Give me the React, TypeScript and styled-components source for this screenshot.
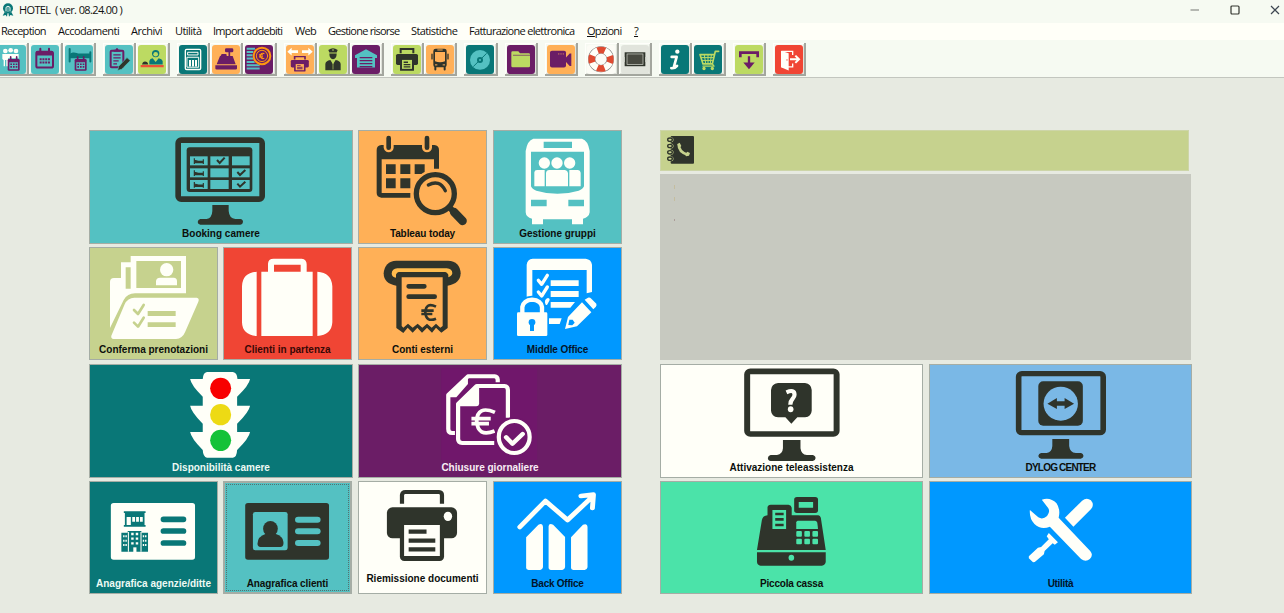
import React from "react";
import styled, { createGlobalStyle } from "styled-components";

const INK = "#2f342b";
const PAPER = "#fffff8";
const AQUA = "#54c1c2";
const TEAL = "#097777";
const ORANGE = "#ffb057";
const PURPLE = "#6b1d66";
const LIME = "#bcda62";
const OLIVE = "#c6d28e";
const RED = "#f04534";
const BLUE = "#0098ff";
const MINT = "#4be3a9";
const SKY = "#7ab8e6";

const GlobalStyle = createGlobalStyle`
  * { box-sizing: border-box; }
  body { margin: 0; overflow: hidden; background: #e7eae1; }
`;

const Window = styled.div`
  width: 1284px;
  height: 613px;
  overflow: hidden;
  display: flex;
  flex-direction: column;
  background: #e7eae1;
  font-family: "Open Sans", "Noto Sans", sans-serif;
  color: #111;
`;

const TitleBar = styled.header`
  height: 23px;
  flex: none;
  display: flex;
  align-items: center;
  padding: 0 4px 3px 2px;
  background: #f6faf2;
`;

const Title = styled.span`
  flex: 1;
  padding-left: 5px;
  font-size: 11px;
  line-height: 14px;
  letter-spacing: -0.62px;
  white-space: pre;
`;

const WindowControls = styled.div`
  display: flex;
  gap: 30px;
  svg { display: block; }
`;

const MenuBar = styled.nav`
  height: 17px;
  flex: none;
  display: flex;
  gap: 12px;
  padding-left: 1px;
  background: ${PAPER};
`;

const MenuItem = styled.span<{ $w: number; $ls?: number }>`
  width: ${(p) => p.$w}px;
  font-size: 11px;
  line-height: 16px;
  letter-spacing: ${(p) => p.$ls ?? -0.7}px;
  white-space: nowrap;
`;

const ToolBar = styled.div`
  height: 38px;
  flex: none;
  display: flex;
  gap: 7px;
  padding-top: 3px;
  background: #f6faf2;
  border-bottom: 1px solid #c3c6bf;
`;

const ToolGroup = styled.div`
  display: flex;
  flex: none;
  &:first-child { margin-left: -4px; }
`;

const ToolButton = styled.div`
  width: 33.33px;
  height: 33px;
  padding: 2px 0 0 2px;
  border-right: 2px solid #a3a69e;
  border-bottom: 2px solid #a3a69e;
  box-shadow: inset 1px 1px 0 #fffffb, inset -1px -1px 0 #dfe2da;
`;

const ToolArt = styled.svg<{ $bg: string }>`
  display: block;
  width: 28px;
  height: 28.5px;
  border-radius: 3px;
  background: ${(p) => p.$bg};
`;

const Desk = styled.main`
  display: flex;
  gap: 38px;
  padding: 52px 0 0 89px;
`;

const Launcher = styled.section`
  display: flex;
  gap: 5px;
`;

const Block = styled.div`
  display: grid;
  grid-template-rows: 114px 114px 114px 113px;
  row-gap: 3px;
  width: 264px;
`;

const TileRow = styled.div<{ $gap?: number }>`
  display: flex;
  gap: ${(p) => p.$gap ?? 6}px;
`;

const Tile = styled.button<{ $w: number; $h: number; $bg: string; $fg?: string; $active?: boolean }>`
  display: flex;
  flex-direction: column;
  align-items: stretch;
  flex: none;
  width: ${(p) => p.$w}px;
  height: ${(p) => p.$h}px;
  padding: 0;
  border: 0;
  background: ${(p) => p.$bg};
  color: ${(p) => p.$fg ?? "#0c0f0c"};
  box-shadow: inset 0 0 0 ${(p) => (p.$active ? 2 : 1)}px #a5ada5;
  outline: ${(p) => (p.$active ? "1px dotted #55706f" : "none")};
  outline-offset: -4px;
`;

const TileArt = styled.svg<{ $h: number }>`
  display: block;
  width: 100%;
  height: ${(p) => p.$h}px;
  overflow: visible;
`;

const TileLabel = styled.span<{ $top: number; $ls: number }>`
  margin-top: ${(p) => p.$top}px;
  font: bold 10px/14px "Liberation Sans", Arial, sans-serif;
  letter-spacing: ${(p) => p.$ls}px;
  text-align: center;
  white-space: nowrap;
`;

const Side = styled.section`
  width: 532px;
  display: flex;
  flex-direction: column;
  gap: 3px;
`;

const PhoneBook = styled.div`
  width: 529px;
  height: 41px;
  padding: 5px 0 0 7px;
  background: ${OLIVE};
  box-shadow: inset 0 0 0 1px #cdd5a8;
  svg { display: block; }
`;

const Notes = styled.div`
  width: 531px;
  height: 186px;
  margin-bottom: 1px;
  padding: 8px 0 0 13px;
  background: #c7c9c0;
`;

type TileProps = {
  label: string;
  w?: number;
  h?: number;
  bg: string;
  fg?: string;
  active?: boolean;
  box: string;
  artHeight?: number;
  tracking?: number;
  children: React.ReactNode;
};

function AppTile({ label, w = 129, h = 113, bg, fg, active, box, artHeight = 96, tracking = 0, children }: TileProps) {
  return (
    <Tile $w={w} $h={h} $bg={bg} $fg={fg} $active={active}>
      <TileArt $h={artHeight} viewBox={box} preserveAspectRatio="none">
        {children}
      </TileArt>
      <TileLabel $top={h === 114 ? 1 : 0} $ls={tracking}>{label}</TileLabel>
    </Tile>
  );
}

function Tool({ bg, children }: { bg: string; children: React.ReactNode }) {
  return (
    <ToolButton>
      <ToolArt $bg={bg} viewBox="0 0 84 86" preserveAspectRatio="none">
        {children}
      </ToolArt>
    </ToolButton>
  );
}

const line = (color: string, width: number) => ({
  fill: "none",
  stroke: color,
  strokeWidth: width,
  strokeLinecap: "round" as const,
  strokeLinejoin: "round" as const,
});

function Printer({ c, bg }: { c: string; bg: string }) {
  return (
    <g>
      <path d="M23 25V12H61V25" fill="none" stroke={c} strokeWidth="6" />
      <rect x="9" y="27" width="66" height="33" rx="5" fill={c} />
      <rect x="21" y="40" width="42" height="38" rx="2" fill={c} />
      <rect x="27" y="45" width="30" height="27" fill={bg} />
      <path d="M32 52H45M32 59H52M32 66H52" stroke={c} strokeWidth="4" />
    </g>
  );
}

function CalendarGlyph({ c }: { c: string }) {
  return (
    <g>
      <rect x="16" y="20" width="50" height="48" rx="5" {...line(c, 6)} />
      <path d="M16 25H66" stroke={c} strokeWidth="14" />
      <path d="M28 11V22M54 11V22" {...line(c, 6)} />
      <path d="M26 43H57M26 53H57" stroke={c} strokeWidth="6" strokeDasharray="6 2.3" />
    </g>
  );
}

function MiniCalendar({ bg }: { bg: string }) {
  return (
    <g>
      <rect x="29" y="42" width="36" height="36" rx="4" fill={PURPLE} />
      <path d="M38 36V46M56 36V46" {...line(PURPLE, 5)} />
      <path d="M34 52H60V73H34Z" fill={bg} />
      <path d="M37 58H58M37 66H58" stroke={PURPLE} strokeWidth="5" strokeDasharray="5 3" />
    </g>
  );
}

function ToolStrip() {
  return (
    <ToolBar>
      <ToolGroup>
        <Tool bg={AQUA}>
          <g fill={PAPER}>
            <circle cx="22" cy="18" r="7" /><circle cx="38" cy="16" r="7" /><circle cx="54" cy="18" r="7" />
            <path d="M13 27H62V40H30V64H25V45H21V64H17V46L13 42Z" />
          </g>
          <MiniCalendar bg={AQUA} />
        </Tool>
        <Tool bg={AQUA}><CalendarGlyph c={PURPLE} /></Tool>
        <Tool bg={AQUA}>
          <path d="M14 12V50M76 22V50" {...line(TEAL, 6)} />
          <path d="M14 27C28 18 34 26 44 26H76V40H14Z" fill={TEAL} />
          <MiniCalendar bg={AQUA} />
        </Tool>
      </ToolGroup>
      <ToolGroup>
        <Tool bg={AQUA}>
          <rect x="17" y="17" width="38" height="50" rx="3" {...line(PURPLE, 6)} />
          <path d="M26 20V14H31Q36 4 41 14H46V20Z" fill={PURPLE} />
          <path d="M25 30H47M25 39H47M25 48H41M25 57H36" stroke={PURPLE} strokeWidth="4" />
          <path d="M38 77L41 64L66 38L76 47L50 73Z" fill={INK} stroke={AQUA} strokeWidth="2" />
        </Tool>
        <Tool bg={LIME}>
          <circle cx="53" cy="26" r="11" fill={TEAL} />
          <circle cx="53" cy="28" r="7" fill={LIME} />
          <path d="M34 59V48Q36 41 44 40L53 51L62 40Q72 42 74 48V59Z" fill={TEAL} />
          <path d="M12 59Q14 50 21 50Q29 50 31 59Z" fill={INK} />
          <path d="M8 64H77" stroke="#ed5137" strokeWidth="7" />
        </Tool>
      </ToolGroup>
      <ToolGroup>
        <Tool bg={TEAL}>
          <rect x="19" y="13" width="46" height="61" rx="4" {...line(PAPER, 4)} />
          <path d="M27 22H57V30H27Z" {...line(PAPER, 3)} />
          <path d="M25 37H59V67H25Z" {...line(PAPER, 3)} />
          <path d="M33 45V65M42 45V65M51 45V65" stroke={PAPER} strokeWidth="6" />
        </Tool>
        <Tool bg={ORANGE}>
          <rect x="39" y="10" width="25" height="12" rx="4" fill={PURPLE} />
          <path d="M52 20V35" {...line(PURPLE, 5)} />
          <path d="M24 33H62L71 58H14ZM10 61H75V71Q75 74 71 74H14Q10 74 10 71Z" fill={PURPLE} />
          <path d="M24 36L29 27H43L45 36" fill={PURPLE} />
        </Tool>
        <Tool bg={PURPLE}>
          <path d="M5 11H30M5 21H25M5 31H23M5 41H25M5 51H29M5 61H44M5 71H44" stroke={AQUA} strokeWidth="6" />
          <circle cx="51" cy="33" r="28" fill={PURPLE} />
          <circle cx="51" cy="33" r="25" {...line("#ff970f", 6)} />
          <circle cx="51" cy="33" r="17" {...line("#ff970f", 3)} />
          <path d="M58 26Q48 22 46 33Q48 44 58 40M42 30H54M42 36H54" fill="none" stroke="#ff970f" strokeWidth="3.5" />
        </Tool>
      </ToolGroup>
      <ToolGroup>
        <Tool bg={ORANGE}>
          <path d="M4 20L17 8V16H36V24H17V32ZM80 20L67 8V16H48V24H67V32Z" fill={PAPER} />
          <g transform="translate(7 27) scale(.82 .68)"><Printer c={PURPLE} bg={ORANGE} /></g>
        </Tool>
        <Tool bg={LIME}>
          <path d="M28 15Q42 4 56 15L53 23H31Z" fill={INK} />
          <path d="M31 26H53Q53 42 42 43Q31 42 31 26Z" fill={INK} />
          <path d="M19 76V57Q20 48 34 45L42 58L50 45Q64 48 65 57V76Z" fill={INK} />
          <path d="M42 49V74" stroke={LIME} strokeWidth="2" />
          <circle cx="42" cy="15" r="2.5" fill={LIME} />
        </Tool>
        <Tool bg={PURPLE}>
          <path d="M42 13L75 31V39H69V68H15V39H9V31Z" fill={AQUA} />
          <path d="M23 38H61M23 47H61M23 56H61M23 65H61" stroke={PURPLE} strokeWidth="4" />
        </Tool>
      </ToolGroup>
      <ToolGroup>
        <Tool bg={LIME}><Printer c={INK} bg={LIME} /></Tool>
        <Tool bg={ORANGE}>
          <rect x="22" y="11" width="40" height="56" rx="7" fill={INK} />
          <path d="M27 21H57V49Q42 55 27 49Z" fill={ORANGE} />
          <path d="M34 15H50M27 60H34M50 60H57" stroke={ORANGE} strokeWidth="3" />
          <path d="M28 67V74M56 67V74" {...line(INK, 6)} />
          <path d="M18 28V42M66 28V42" {...line(INK, 4)} />
        </Tool>
      </ToolGroup>
      <ToolGroup>
        <Tool bg={TEAL}>
          <circle cx="42" cy="45" r="30" fill={AQUA} />
          <path d="M22 65L62 25" stroke={TEAL} strokeWidth="3" />
          <circle cx="42" cy="45" r="9" fill={TEAL} /><circle cx="42" cy="45" r="3" fill={AQUA} />
        </Tool>
      </ToolGroup>
      <ToolGroup>
        <Tool bg={PURPLE}>
          <path d="M13 23Q13 19 17 19H34L39 25H65Q69 25 69 29V63Q69 67 65 67H17Q13 67 13 63Z" fill={LIME} />
          <path d="M18 31H69" stroke={PURPLE} strokeWidth="2" />
        </Tool>
      </ToolGroup>
      <ToolGroup>
        <Tool bg={ORANGE}>
          <rect x="9" y="17" width="48" height="51" rx="6" fill={PURPLE} />
          <path d="M57 38L68 26H73V63H68L57 51Z" fill={PURPLE} />
          <path d="M33 27H53" stroke={ORANGE} strokeWidth="2" strokeDasharray="3 2" />
        </Tool>
      </ToolGroup>
      <ToolGroup>
        <Tool bg="#fcfcf6">
          <circle cx="42" cy="43" r="28" fill="none" stroke="#777" strokeWidth="22" />
          <circle cx="42" cy="43" r="28" fill="none" stroke={PAPER} strokeWidth="19" />
          <circle cx="42" cy="43" r="28" fill="none" stroke="#df4b31" strokeWidth="20" strokeDasharray="22 21.98" strokeDashoffset="11" />
        </Tool>
        <Tool bg="#e1e4dc">
          <rect x="11" y="22" width="62" height="42" fill={INK} />
          <rect x="18" y="27" width="48" height="32" fill="#484a41" stroke="#d8dbd3" strokeWidth="2" />
          <path d="M8 36V51M76 36V51" stroke="#d8dbd3" strokeWidth="6" />
        </Tool>
      </ToolGroup>
      <ToolGroup>
        <Tool bg={TEAL}>
          <circle cx="49" cy="20" r="6.5" fill={PAPER} />
          <path d="M32 36H47L38 68M31 70Q42 71 48 63" {...line(PAPER, 8)} />
        </Tool>
        <Tool bg={TEAL}>
          <path d="M74 19H64L55 57H27L18 29H60" {...line(LIME, 5)} />
          <path d="M31 31L35 55M42 31V55M52 31L49 55M22 38H59M25 47H57" {...line(LIME, 3)} />
          <path d="M55 57L60 64H27" {...line(LIME, 4)} />
          <circle cx="30" cy="71" r="5" fill={LIME} /><circle cx="55" cy="71" r="5" fill={LIME} />
        </Tool>
      </ToolGroup>
      <ToolGroup>
        <Tool bg={LIME}>
          <path d="M16 37V23H68V37" fill="none" stroke={PURPLE} strokeWidth="8" />
          <path d="M42 34V58" stroke={PURPLE} strokeWidth="7" />
          <path d="M25 53H59L42 73Z" fill={PURPLE} />
        </Tool>
      </ToolGroup>
      <ToolGroup>
        <Tool bg={RED}>
          <path d="M20 19H53V30M53 56V66H20" fill="none" stroke={PAPER} strokeWidth="4" />
          <path d="M18 17L41 25V77L18 67Z" fill={PAPER} />
          <path d="M45 43H70M61 32L72 43L61 54" fill="none" stroke={PAPER} strokeWidth="6" />
          <circle cx="36" cy="45" r="2" fill={RED} />
        </Tool>
      </ToolGroup>
    </ToolBar>
  );
}

function Cells() {
  const cols = [[330, 53], [391, 55], [456, 53]];
  const rows = [94, 130, 165];
  return (
    <g>
      {rows.map((y) => cols.map(([x, w]) => <rect key={x + "-" + y} x={x} y={y} width={w} height={27} fill={AQUA} />))}
      {rows.map((y) => (
        <path key={y} d={`M343 ${y + 6}V${y + 23}M370 ${y + 9}V${y + 23}M343 ${y + 12}L355 ${y + 15}H370V${y + 19}H343`} fill={INK} stroke={INK} strokeWidth="3.5" />
      ))}
      <path d="M411 105L419 114L434 98M472 141L480 150L496 135M472 176L480 185L496 170" fill="none" stroke={INK} strokeWidth="6" />
    </g>
  );
}

function LeftBlock() {
  return (
    <Block>
      <AppTile label="Booking camere" w={264} h={114} bg={AQUA} box="27 15 792 288">
        <rect x="294.5" y="45.5" width="252" height="177" rx="9" {...line(INK, 17)} />
        <rect x="320" y="67" width="197" height="134" rx="9" fill={INK} />
        <Cells />
        <path d="M397 240H446V258Q448 281 466 282H481Q489 283 489 291Q488 299 481 299H361Q353 298 353 291Q354 283 361 282H380Q396 279 397 258Z" fill={INK} />
      </AppTile>
      <TileRow $gap={5}>
        <AppTile label="Conferma prenotazioni" bg={OLIVE} box="27 12 387 288">
          <path d="M90 255V117Q90 105 102 105H123V58H152V39H318V151H165Q142 151 131 171Z" fill={PAPER} />
          <path d="M169 54H303V135H169ZM137 73H152V137H137Z" fill={OLIVE} />
          <circle cx="260" cy="80" r="20" fill={PAPER} />
          <path d="M228 127V113Q230 104 240 104H281Q291 105 291 114V127Z" fill={PAPER} />
          <path d="M94 278L134 184Q143 164 163 164H350Q359 166 355 176L315 268Q307 287 288 288H101Q92 287 94 278Z" fill={PAPER} />
          <path d="M203 204H287V219H203ZM203 238H287V252H203Z" fill={OLIVE} />
          <path d="M162 201L174 213L191 186M162 239L174 251L191 224" {...line(OLIVE, 8)} />
        </AppTile>
        <AppTile label="Clienti in partenza" bg={RED} fg="#380806" box="429 12 387 288">
          <path d="M573 87V63Q573 56 581 56H664Q671 57 671 64V87" fill="none" stroke={PAPER} strokeWidth="18" />
          <path d="M530 86V279Q487 276 486 238V130Q487 89 530 86ZM544 86H698V279H544ZM712 86Q755 89 757 130V238Q755 276 712 279Z" fill={PAPER} />
        </AppTile>
      </TileRow>
      <AppTile label="Disponibilità camere" w={264} h={114} bg={TEAL} fg="#eefaf4" box="25.7 12 752.7 288">
        <path d="M362 36H436Q448 38 449 57H485Q482 76 448 110V137H485Q482 156 448 191V216H485Q482 235 448 270Q447 292 436 293H362Q351 291 350 270Q317 235 314 216H350V191Q317 156 314 137H350V110Q317 76 314 57H350Q351 38 362 36Z" fill={PAPER} />
        <ellipse cx="401" cy="85" rx="30" ry="32" fill="#f80000" />
        <ellipse cx="401" cy="164" rx="30" ry="32" fill="#edda14" />
        <ellipse cx="401" cy="241" rx="30" ry="32" fill="#14c238" />
      </AppTile>
      <TileRow $gap={5}>
        <AppTile label="Anagrafica agenzie/ditte" bg={TEAL} fg="#eefaf4" box="25.7 15 367.8 288">
          <rect x="88" y="81" width="240" height="170" rx="8" fill={PAPER} />
          <g fill={TEAL}>
            {[130, 165, 201].map((y) => <rect key={y} x="230" y={y - 8.5} width="73" height="17" rx="8" />)}
            <path d="M125 106H187V111H184V147H187V152H125V147H128V111H125Z" />
            <path d="M118 170H136V165H175V170H194V227H118Z" />
          </g>
          <path d="M133 123H145V147H133ZM149 123H157V137H149ZM160 123H168V137H160ZM171 123H179V137H171Z" fill={PAPER} />
          <path d="M146 174H166M146 188H166M146 202H166" stroke={PAPER} strokeWidth="7" strokeDasharray="7 6" />
          <path d="M123 181H134M123 194H134M123 207H134M179 181H190M179 194H190M179 207H190" stroke={PAPER} strokeWidth="6" strokeDasharray="4 2.5" />
          <path d="M138 168V227M174 168V227" stroke={PAPER} strokeWidth="3" />
          <path d="M152 214H161V228H152Z" fill={PAPER} />
        </AppTile>
        <AppTile label="Anagrafica clienti" bg={AQUA} active box="407.7 15 367.8 288" tracking={-0.1}>
          <rect x="471" y="81" width="239" height="170" rx="8" fill={INK} />
          <rect x="493" y="108" width="99" height="115" rx="7" fill={AQUA} />
          <ellipse cx="543" cy="158" rx="21" ry="23" fill={INK} />
          <path d="M530 173H557Q580 181 580 198V204Q579 213 571 213H515Q506 212 506 203Q506 181 530 173Z" fill={INK} />
          {[131, 166, 201].map((y) => <rect key={y} x="613" y={y - 9} width="73" height="18" rx="9" fill={AQUA} />)}
        </AppTile>
      </TileRow>
    </Block>
  );
}

function RightBlock() {
  return (
    <Block>
      <TileRow>
        <AppTile label="Tableau today" h={114} bg={ORANGE} box="24 15 387 288" tracking={-0.1}>
          <path d="M80 75Q80 61 94 60H101V68Q104 81 116 82Q129 81 131 68V60H216V68Q218 81 231 82Q244 81 246 68V60H253Q267 61 267 75V131H252V103H95V204H181V218H94Q80 216 80 204Z" fill={INK} />
          <path d="M116 39V68M231 39V68" {...line(INK, 14)} />
          <path d="M108 118H137V147H108ZM151 118H181V147H151ZM194 118H224V147H194ZM108 160H137V190H108ZM151 160H181V190H151Z" fill={INK} />
          <circle cx="256" cy="206" r="73" fill={ORANGE} />
          <circle cx="256" cy="206" r="57" {...line(INK, 16)} />
          <path d="M235 180Q268 162 286 197" {...line(INK, 10)} />
          <path d="M298 247L309 258" {...line(INK, 18)} />
          <path d="M312 261L338 288" {...line(INK, 25)} />
        </AppTile>
        <AppTile label="Gestione gruppi" h={114} bg={AQUA} box="429 15 387 288">
          <path d="M550 41H696Q714 46 719 78V262Q717 277 699 281V298H666V283H579V298H546V281Q528 277 527 262V78Q532 46 550 41Z" fill={PAPER} />
          <path d="M581 50H666V69H581ZM543 80H702V184Q699 192 686 197Q622 216 559 197Q546 192 543 184ZM543 224H590V244H543ZM655 224H702V244H655Z" fill={AQUA} />
          <g fill={PAPER}>
            <circle cx="583" cy="114" r="17" /><circle cx="621" cy="114" r="17" /><circle cx="659" cy="114" r="17" />
            <path d="M553 184V142Q554 135 561 135H584V184ZM588 184V144Q589 135 598 135H645Q653 136 654 144V184ZM658 184V135H684Q691 136 692 143V184Z" />
          </g>
        </AppTile>
      </TileRow>
      <TileRow>
        <AppTile label="Conti esterni" bg={ORANGE} box="24 12 387 288">
          <path d="M139 128Q101 122 101 91Q104 55 139 53H294Q330 55 332 91Q331 122 293 128Z" fill={INK} />
          <path d="M125 92Q126 77 142 76H290Q307 78 307 91Q306 99 295 103V95Q292 87 283 87H150Q140 88 138 95V104Q126 102 125 92Z" fill="#ffbc4e" />
          <path d="M139 255V96Q140 88 149 87H282Q292 88 293 97V255L274 269L258 254L246 269L231 254L216 269L202 254L188 269L173 254L160 270Z" fill={INK} />
          <path d="M155 103H278V249L271 254L258 242L245 254L231 242L217 254L203 242L188 254L174 242L160 254L155 249Z" fill={ORANGE} />
          <path d="M176 130H223M176 161H254" {...line(INK, 14)} />
          <path d="M258 191Q228 176 226 208Q228 239 258 227M214 203H251M214 213H247" fill="none" stroke={INK} strokeWidth="8" />
        </AppTile>
        <AppTile label="Middle Office" bg={BLUE} fg="#02142a" box="429 12 387 288" tracking={-0.1}>
          <path d="M530 162V65Q532 48 548 47H707Q724 49 726 65V147L710 151V81H547V160Z" fill={PAPER} />
          <path d="M602 112H686V129H602ZM602 144H686V162H602ZM602 177H675L661 194H602ZM597 226H635L629 243H597Z" fill={PAPER} />
          <path d="M565 112L575 124L592 97M565 147L575 159L592 132M590 174L594 170L588 181" {...line(PAPER, 10)} />
          <path d="M516 212V192Q519 172 546 170Q574 172 577 192V212" fill="none" stroke={BLUE} strokeWidth="24" />
          <path d="M517 214V192Q521 172 546 170Q573 172 576 192V214" fill="none" stroke={PAPER} strokeWidth="13" />
          <rect x="501" y="208" width="91" height="71" rx="4" fill={PAPER} />
          <circle cx="546" cy="238" r="10" fill={BLUE} /><path d="M540 240H552V264H540Z" fill={BLUE} />
          <path d="M645 258L654 222L696 178L724 208L681 250ZM704 170L714 164Q719 162 724 167L739 182Q741 187 737 192L730 199Z" fill={PAPER} />
          <path d="M655 246L658 230L668 230L674 239L667 247Z" fill={BLUE} />
        </AppTile>
      </TileRow>
      <AppTile label="Chiusure giornaliere" w={264} h={114} bg={PURPLE} fg="#f8eef4" box="792.6 12 752.7 288">
        <rect x="1030" y="25" width="273" height="275" fill="#70176b" />
        <path d="M1191 67V59Q1190 50 1182 49H1106L1050 105V207Q1050 219 1061 219H1069" {...line(PAPER, 12)} strokeLinecap="butt" />
        <path d="M1106 44V72L1073 112H1046Z" fill={PAPER} />
        <path d="M1181 249H1090Q1078 248 1078 237V132L1131 78H1210Q1220 79 1220 90V173" {...line(PAPER, 12)} strokeLinecap="butt" />
        <path d="M1138 78V132Q1137 139 1130 139H1078V128L1128 76Z" fill={PAPER} />
        <path d="M1183 157Q1133 135 1131 183Q1134 233 1182 213M1116 176H1171M1116 191H1166" fill="none" stroke={PAPER} strokeWidth="11" />
        <ellipse cx="1238" cy="231" rx="56" ry="60" fill="#70176b" />
        <ellipse cx="1238" cy="231" rx="44" ry="48" {...line(PAPER, 12)} />
        <path d="M1215 232L1233 251L1262 222" {...line(PAPER, 13)} />
      </AppTile>
      <TileRow>
        <AppTile label="Riemissione documenti" bg={PAPER} artHeight={91} box="792.6 15 367.8 273">
          <path d="M918 83V57Q919 48 928 48H1023Q1032 49 1032 57V83" fill="none" stroke={INK} strokeWidth="12" />
          <rect x="875" y="94" width="200" height="93" rx="16" fill={INK} />
          <path d="M912 170H1038V242Q1037 254 1025 255H925Q913 254 912 242Z" fill={INK} />
          <path d="M924 147H1026V240H924Z" fill={PAPER} />
          <ellipse cx="1049" cy="121" rx="12" ry="14" fill={PAPER} />
          <path d="M937 167H988M937 194H1013M937 220H1013" stroke={INK} strokeWidth="13" />
        </AppTile>
        <AppTile label="Back Office" bg={BLUE} fg="#02142a" box="1177.5 15 367.8 288" tracking={-0.25}>
          <path d="M1254 153L1327 75L1390 132L1455 68M1428 60L1464 56L1461 96" {...line(PAPER, 14)} />
          <path d="M1272 276V184L1307 146Q1319 140 1320 153V274Q1319 281 1312 282H1279Q1272 281 1272 276ZM1336 276V151Q1337 140 1349 146L1383 183V274Q1382 281 1375 282H1342Q1336 281 1336 276ZM1400 276V184L1434 146Q1446 141 1447 153V274Q1446 281 1439 282H1406Q1400 281 1400 276Z" fill={PAPER} />
        </AppTile>
      </TileRow>
    </Block>
  );
}

function SidePanel() {
  return (
    <Side>
      <PhoneBook>
        <svg width="28" height="30" viewBox="0 0 84 90">
          <rect x="11" y="3" width="70" height="83" rx="3" fill={INK} />
          {[14, 33, 52, 71].map((y) => (
            <g key={y}>
              <circle cx="12" cy={y} r="4" fill="none" stroke={OLIVE} strokeWidth="7" />
              <ellipse cx="9" cy={y} rx="7" ry="5" fill="none" stroke={INK} strokeWidth="4" />
            </g>
          ))}
          <path d="M35 28Q35 52 62 59" fill="none" stroke={OLIVE} strokeWidth="8" />
          <path d="M31 27L38 23L43 33L36 40ZM54 58L61 50L69 54L66 62L57 64Z" fill={OLIVE} />
        </svg>
      </PhoneBook>
      <Notes>
        <svg width="4" height="50" viewBox="0 0 4 50">
          <path d="M1.5 3V7M1.5 15V19" stroke="#c4bd9f" />
          <path d="M1.5 37V39" stroke="#ab9c98" />
        </svg>
      </Notes>
      <TileRow>
        <AppTile label="Attivazione teleassistenza" w={263} h={114} bg={PAPER} box="28.5 12 749.8 288">
          <rect x="277" y="34" width="255" height="188" rx="9" {...line(INK, 17)} />
          <path d="M365 69H442Q460 72 461 90V152Q460 169 442 172H420L403 191L386 172H365Q346 169 345 152V90Q346 72 365 69Z" fill={INK} />
          <path d="M389 97Q412 87 412 104C412 117 400 115 400 134" {...line(PAPER, 12)} strokeLinecap="butt" />
          <ellipse cx="401" cy="148" rx="8" ry="9" fill={PAPER} />
          <path d="M379 240H429V265Q431 284 447 285H464Q472 287 472 295Q471 303 464 303H344Q336 302 336 294Q337 286 344 285H362Q378 282 379 265Z" fill={INK} />
        </AppTile>
        <AppTile label="DYLOG CENTER" w={263} h={114} bg={SKY} box="795.4 12 749.8 288" tracking={-0.8}>
          <rect x="1051" y="41" width="241" height="177" rx="9" {...line(INK, 16)} />
          <rect x="1107" y="64" width="127" height="133" rx="14" fill={INK} />
          <ellipse cx="1171" cy="131" rx="49" ry="51" fill={SKY} />
          <path d="M1133 131L1160 114V124H1182V114L1209 131L1182 147V137H1160V147Z" fill={INK} />
          <path d="M1147 237H1195V258Q1197 278 1214 279H1229Q1235 281 1236 288Q1235 295 1228 296H1115Q1108 295 1107 288Q1108 281 1115 279H1131Q1146 276 1147 258Z" fill={INK} />
        </AppTile>
      </TileRow>
      <TileRow>
        <AppTile label="Piccola cassa" w={263} bg={MINT} box="28.5 363 749.8 288" tracking={-0.2}>
          <path d="M335 466V442Q336 434 344 434H395Q403 435 404 443V466H480Q485 467 487 473L501 570H305L319 480Q321 467 335 466Z" fill={INK} />
          <path d="M305 577H501V606Q499 616 490 617H315Q306 616 305 606Z" fill={INK} />
          <rect x="411" y="411" width="68" height="48" rx="8" fill={INK} />
          <path d="M424 426H465V443H424ZM349 450H388V507H349Z" fill={MINT} />
          <path d="M357 462H381M357 478H381M357 495H381" stroke={INK} strokeWidth="8" />
          <path d="M421 482H471Q476 483 477 488L479 507H417V487Q418 483 421 482Z" fill={MINT} />
          {[513, 536].map((y) => [417, 440, 463].map((x) => (
            <rect key={x + "-" + y} x={x} y={y} width="16" height="17" rx="3" fill={MINT} />
          )))}
          <ellipse cx="403" cy="593" rx="8" ry="9" fill={MINT} />
        </AppTile>
        <AppTile label="Utilità" w={263} bg={BLUE} fg="#02142a" box="795.4 363 749.8 288" tracking={-0.3}>
          <path d="M1117 419Q1141 410 1159 430Q1171 449 1165 473L1255 573Q1265 585 1254 597Q1242 608 1229 597L1140 500Q1115 511 1096 492Q1081 475 1083 450L1107 472Q1120 480 1132 468Q1142 454 1135 444Z" fill={PAPER} />
          <path d="M1183 473L1232 422Q1245 411 1257 421Q1268 435 1257 448L1207 500Z" fill={PAPER} />
          <path d="M1137 519L1163 547L1154 554L1148 550L1125 573L1123 583L1097 606L1092 607L1080 595V589L1106 563L1115 561L1137 538L1131 529Z" fill={PAPER} />
        </AppTile>
      </TileRow>
    </Side>
  );
}

export default function App() {
  return (
    <>
      <GlobalStyle />
      <Window>
        <TitleBar>
          <svg width="12" height="14" viewBox="0 0 36 42">
            <circle cx="18" cy="16" r="15" fill={TEAL} />
            <path d="M8 27L2 38L11 36L15 41L17 29M28 27L34 38L25 36L21 41L19 29" fill={TEAL} />
            <path d="M12 24V13Q18 6 24 13V24" {...line("#eef8f2", 3)} />
            <path d="M18 12V27" stroke="#eef8f2" strokeWidth="2" />
          </svg>
          <Title>{"HOTEL  ( ver. 08.24.00 )"}</Title>
          <WindowControls>
            <svg width="10" height="10" viewBox="0 0 10 10"><path d="M0.5 5H9" stroke="#8b8d87" strokeWidth="1.2" /></svg>
            <svg width="10" height="10" viewBox="0 0 10 10"><rect x="1" y="1" width="8" height="8" rx="1" fill="none" stroke="#33352f" strokeWidth="1.2" /></svg>
            <svg width="10" height="10" viewBox="0 0 10 10"><path d="M1 1L9 9M9 1L1 9" stroke="#3c4650" strokeWidth="1.2" /></svg>
          </WindowControls>
        </TitleBar>
        <MenuBar>
          <MenuItem $w={45}>Reception</MenuItem>
          <MenuItem $w={61} $ls={-0.5}>Accodamenti</MenuItem>
          <MenuItem $w={32} $ls={-0.5}>Archivi</MenuItem>
          <MenuItem $w={26} $ls={-0.55}>Utilità</MenuItem>
          <MenuItem $w={70}>Import addebiti</MenuItem>
          <MenuItem $w={21}>Web</MenuItem>
          <MenuItem $w={71} $ls={-0.76}>Gestione risorse</MenuItem>
          <MenuItem $w={46} $ls={-0.6}>Statistiche</MenuItem>
          <MenuItem $w={106}>Fatturazione elettronica</MenuItem>
          <MenuItem $w={35}><u>O</u>pzioni</MenuItem>
          <MenuItem $w={6}><u>?</u></MenuItem>
        </MenuBar>
        <ToolStrip />
        <Desk>
          <Launcher>
            <LeftBlock />
            <RightBlock />
          </Launcher>
          <SidePanel />
        </Desk>
      </Window>
    </>
  );
}
